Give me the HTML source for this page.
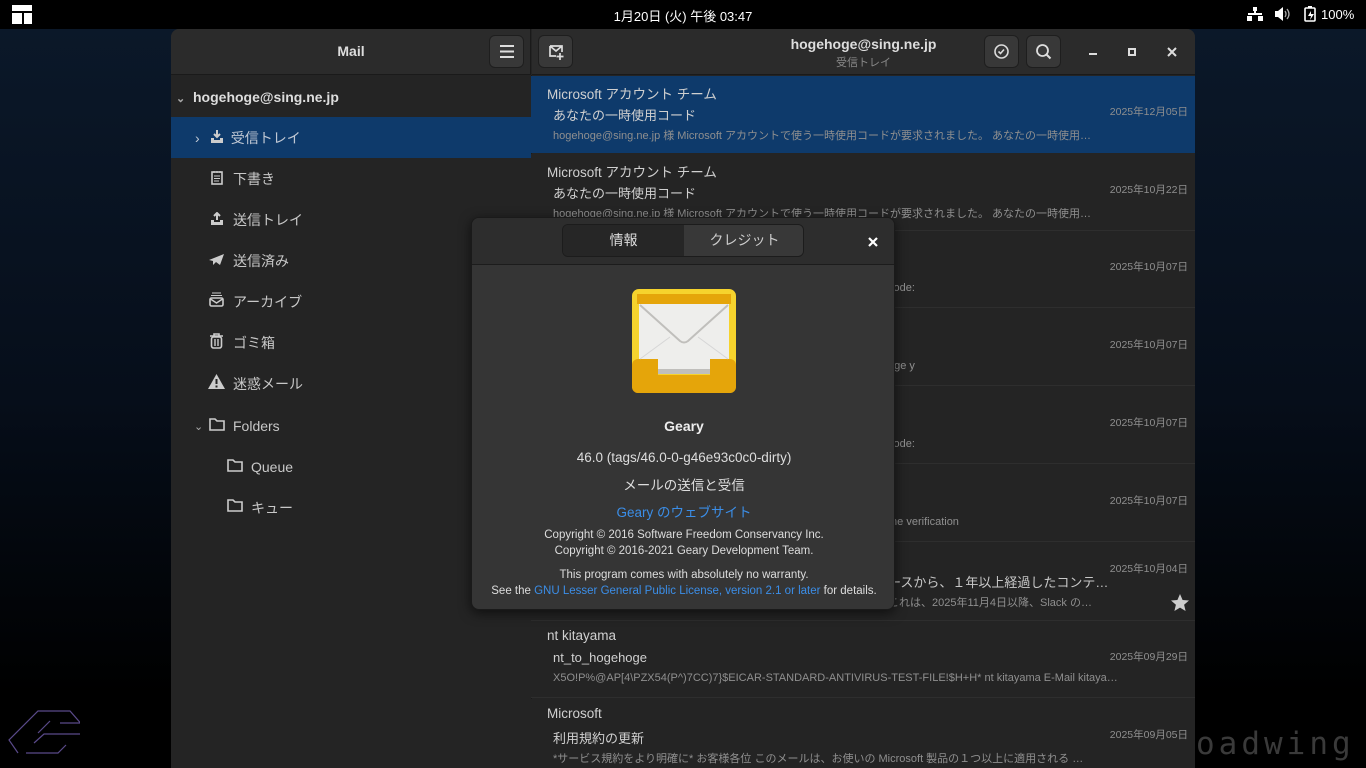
<!DOCTYPE html>
<html><head><meta charset="utf-8"><style>
*{margin:0;padding:0;box-sizing:border-box}
body{width:1366px;height:768px;overflow:hidden;background:#000;font-family:"Liberation Sans","Noto Sans CJK JP",sans-serif;position:relative;color:#ddd}
.abs{position:absolute}
#bg{left:0;top:29px;width:1366px;height:739px;background:linear-gradient(180deg,#0b1829 0%,#060e1a 50%,#000 90%)}
#top{left:0;top:0;width:1366px;height:29px;background:#000;color:#fff;font-size:13px}
#win{left:171px;top:29px;width:1024px;height:739px;background:#242424;border-radius:8px 8px 0 0;overflow:hidden}
.hb{top:0;height:46px;background:#2b2b2b;border-bottom:1px solid #1a1a1a}
.btn{width:35px;height:33px;background:#383838;border-radius:6px;border:1px solid #1e1e1e}
.side{font-size:14px;color:#c8c8c8}
.row{left:360px;width:664px;height:77px;border-bottom:1px solid #2e2e2e;background:#242424}
.row .s{position:absolute;left:16px;top:7px;font-size:13.5px;color:#d0d0d0}
.row .j{position:absolute;left:22px;top:29px;font-size:13px;color:#d0d0d0}
.row .p{position:absolute;left:22px;top:51px;font-size:11px;color:#8f8f8f;white-space:nowrap}
.row .d{position:absolute;right:7px;top:28px;font-size:10.5px;color:#8f8f8f}
#dlg{left:471px;top:217px;width:424px;height:393px;background:#353535;border:1px solid #1a1a1a;border-radius:8px;box-shadow:0 3px 12px rgba(0,0,0,.6);overflow:hidden;text-align:center}
a{color:#3b8ee8}
</style></head><body>
<div id="bg" class="abs"></div>
<div id="top" class="abs">
 <svg class="abs" style="left:12px;top:5px" width="20" height="19"><rect x="0" y="0" width="20" height="6" fill="#fff"/><rect x="0" y="8" width="10" height="11" fill="#fff"/><rect x="12" y="8" width="8" height="11" fill="#fff"/></svg>
 <div class="abs" style="left:0;width:1366px;top:6px;text-align:center">1月20日 (火) 午後 03:47</div>
 <svg class="abs" style="left:1247px;top:7px" width="16" height="14"><rect x="6" y="0" width="4" height="4" fill="#fff"/><rect x="7" y="4" width="2" height="3" fill="#fff"/><rect x="1" y="6" width="14" height="2" fill="#fff"/><rect x="0" y="9" width="5" height="5" fill="#fff"/><rect x="11" y="9" width="5" height="5" fill="#fff"/></svg>
 <svg class="abs" style="left:1275px;top:7px" width="16" height="14"><path d="M0 4h3l5-4v14l-5-4H0z" fill="#fff"/><path d="M10 4q2 3 0 6M12 2q4 5 0 10" stroke="#aaa" fill="none" stroke-width="1.3"/></svg>
 <svg class="abs" style="left:1304px;top:6px" width="13" height="16"><rect x="1" y="2" width="10" height="13" rx="1" fill="none" stroke="#fff" stroke-width="1.6"/><rect x="4" y="0" width="4" height="2" fill="#fff"/><path d="M7 5l-3 5h3l-1 4 4-6H7z" fill="#fff"/></svg>
 <div class="abs" style="left:1321px;top:7px">100%</div>
</div>
<svg class="abs" style="left:8px;top:705px" width="72" height="50"><g fill="none" stroke="#5a4a8a" stroke-width="1.2"><path d="M10 48L1 35 30 6h32l14 16M26 38l10-9h36M18 48h32l8-8M42 16l-12 12M52 18h22"/></g></svg>
<div class="abs" style="left:1196px;top:726px;font-size:31px;color:#3a3a3a;letter-spacing:4px;font-family:'DejaVu Sans Mono',monospace;font-weight:100">oadwing</div>

<div id="win" class="abs">
 <div class="abs hb" style="left:0;width:360px;border-right:1px solid #1a1a1a"></div>
 <div class="abs hb" style="left:361px;width:663px"></div>
 <div class="abs" style="left:0;width:360px;top:14px;text-align:center;font-size:14px;font-weight:bold;color:#ddd">Mail</div>
 <div class="abs btn" style="left:318px;top:6px"><svg width="33" height="31"><path d="M10 10h14M10 15.5h14M10 21h14" stroke="#ddd" stroke-width="2"/></svg></div>
 <div class="abs btn" style="left:367px;top:6px"><svg width="33" height="31"><path d="M11 10h12v6M11 10v10h6M11 10l6 5 6-5M21 17v7M17.5 20.5h7" stroke="#ddd" stroke-width="1.7" fill="none"/></svg></div>
 <div class="abs" style="left:560px;width:265px;top:7px;text-align:center;font-size:14px;font-weight:bold;color:#ddd">hogehoge@sing.ne.jp</div>
 <div class="abs" style="left:560px;width:265px;top:25px;text-align:center;font-size:11px;color:#888">受信トレイ</div>
 <div class="abs btn" style="left:813px;top:6px"><svg width="33" height="31"><circle cx="16.5" cy="15.5" r="6.5" stroke="#ddd" stroke-width="1.6" fill="none"/><path d="M13.5 15.5l2 2 3.5-4" stroke="#ddd" stroke-width="1.6" fill="none"/></svg></div>
 <div class="abs btn" style="left:855px;top:6px"><svg width="33" height="31"><circle cx="15.5" cy="14.5" r="5.5" stroke="#ddd" stroke-width="1.8" fill="none"/><path d="M19.5 18.5l4 4" stroke="#ddd" stroke-width="2"/></svg></div>
 <div class="abs" style="left:918px;top:24px;width:8px;height:2px;background:#ddd"></div>
 <div class="abs" style="left:957px;top:19px;width:8px;height:8px;border:2px solid #ddd"></div>
 <svg class="abs" style="left:996px;top:18px" width="10" height="10"><path d="M1 1l8 8M9 1l-8 8" stroke="#ddd" stroke-width="2"/></svg>

 <div class="abs side" style="left:5px;top:60px;font-weight:bold;color:#ddd"><span style="font-size:11px;color:#aaa">&#8964;</span>&nbsp; hogehoge@sing.ne.jp</div>
 <div class="abs" style="left:0;top:88px;width:360px;height:41px;background:#0e3a6b"></div>
 <div class="abs side" style="left:24px;top:99px;color:#c0c8d4">›&nbsp;&nbsp;&nbsp;&nbsp;&nbsp;&nbsp;&nbsp; 受信トレイ</div>
 <svg class="abs" style="left:40px;top:101px" width="12" height="13"><path d="M6 0v7M3 4l3 3 3-3" stroke="#ccc" stroke-width="2" fill="none"/><path d="M0 8h3v2h6V8h3v5H0z" fill="#ccc"/></svg>
 <div class="abs side" style="left:62px;top:140px">下書き</div>
 <svg class="abs" style="left:40px;top:141px" width="12" height="15"><rect x="1" y="2" width="10" height="12" fill="none" stroke="#ccc" stroke-width="1.6"/><path d="M3 6h6M3 8.5h6M3 11h5M3 1v2M6 1v2M9 1v2" stroke="#ccc"/></svg>
 <div class="abs side" style="left:62px;top:181px">送信トレイ</div>
 <svg class="abs" style="left:40px;top:183px" width="12" height="13"><path d="M6 8V1M3 4l3-3 3 3" stroke="#ccc" stroke-width="2" fill="none"/><path d="M0 8h3v2h6V8h3v5H0z" fill="#ccc"/></svg>
 <div class="abs side" style="left:62px;top:222px">送信済み</div>
 <svg class="abs" style="left:38px;top:225px" width="15" height="12"><path d="M0 6L15 0 11 11 7 8 4 11V7z" fill="#ccc"/></svg>
 <div class="abs side" style="left:62px;top:263px">アーカイブ</div>
 <svg class="abs" style="left:38px;top:263px" width="15" height="15"><path d="M3 1h9M2 3.5h11" stroke="#ccc"/><rect x="1" y="6" width="13" height="8" rx="1.5" fill="none" stroke="#ccc" stroke-width="1.6"/><path d="M1.5 7l6 4 6-4" stroke="#ccc" fill="none" stroke-width="1.4"/></svg>
 <div class="abs side" style="left:62px;top:304px">ゴミ箱</div>
 <svg class="abs" style="left:38px;top:304px" width="15" height="16"><path d="M1 3h13M5 3V1h5v2" stroke="#ccc" stroke-width="1.6" fill="none"/><rect x="2.5" y="4" width="10" height="11" rx="2" fill="none" stroke="#ccc" stroke-width="1.6"/><path d="M6 6v7M9 6v7" stroke="#ccc" stroke-width="1.4"/></svg>
 <div class="abs side" style="left:62px;top:345px">迷惑メール</div>
 <svg class="abs" style="left:37px;top:345px" width="17" height="15"><path d="M8.5 0L17 15H0z" fill="#ccc"/><path d="M8.5 5v5M8.5 11.5v2" stroke="#242424" stroke-width="2"/></svg>
 <div class="abs side" style="left:23px;top:388px"><span style="font-size:11px;color:#aaa">&#8964;</span></div>
 <div class="abs side" style="left:62px;top:389px">Folders</div>
 <svg class="abs" style="left:38px;top:389px" width="16" height="13"><path d="M1 1h5l2 2h7v9H1z" fill="none" stroke="#ccc" stroke-width="1.6"/></svg>
 <div class="abs side" style="left:80px;top:430px">Queue</div>
 <svg class="abs" style="left:56px;top:430px" width="16" height="13"><path d="M1 1h5l2 2h7v9H1z" fill="none" stroke="#ccc" stroke-width="1.6"/></svg>
 <div class="abs side" style="left:80px;top:469px">キュー</div>
 <svg class="abs" style="left:56px;top:470px" width="16" height="13"><path d="M1 1h5l2 2h7v9H1z" fill="none" stroke="#ccc" stroke-width="1.6"/></svg>

 <div class="abs" style="left:360px;top:46px;width:1px;height:700px;background:#1a1a1a"></div>
 <div class="abs row" style="top:47px;background:#0e3a6b;border-color:#0e3a6b"><div class="s">Microsoft アカウント チーム</div><div class="j">あなたの一時使用コード</div><div class="p">hogehoge@sing.ne.jp 様 Microsoft アカウントで使う一時使用コードが要求されました。 あなたの一時使用…</div><div class="d">2025年12月05日</div></div>
 <div class="abs row" style="top:125px"><div class="s">Microsoft アカウント チーム</div><div class="j">あなたの一時使用コード</div><div class="p">hogehoge@sing.ne.jp 様 Microsoft アカウントで使う一時使用コードが要求されました。 あなたの一時使用…</div><div class="d">2025年10月22日</div></div>
 <div class="abs row" style="top:202px"><div class="p" style="left:357px">code:</div><div class="d">2025年10月07日</div></div>
 <div class="abs row" style="top:280px"><div class="p" style="left:357px">nge y</div><div class="d">2025年10月07日</div></div>
 <div class="abs row" style="top:358px"><div class="p" style="left:357px">code:</div><div class="d">2025年10月07日</div></div>
 <div class="abs row" style="top:436px"><div class="p" style="left:357px">the verification</div><div class="d">2025年10月07日</div></div>
 <div class="abs row" style="top:514px;height:78px"><div class="j" style="left:357px;top:29px;color:#c8c8c8">ースから、１年以上経過したコンテ…</div><div class="p" style="left:357px;top:51px">これは、2025年11月4日以降、Slack の…</div><div class="d" style="top:18px">2025年10月04日</div><svg class="abs" style="right:6px;top:51px" width="18" height="17"><path d="M9 0l2.6 6 6.4.5-4.9 4.2 1.5 6.3L9 13.6 3.4 17l1.5-6.3L0 6.5 6.4 6z" fill="#ccc"/></svg></div>
 <div class="abs row" style="top:592px"><div class="s">nt kitayama</div><div class="j">nt_to_hogehoge</div><div class="p">X5O!P%@AP[4\PZX54(P^)7CC)7}$EICAR-STANDARD-ANTIVIRUS-TEST-FILE!$H+H* nt kitayama E-Mail kitaya…</div><div class="d">2025年09月29日</div></div>
 <div class="abs row" style="top:670px"><div class="s">Microsoft</div><div class="j">利用規約の更新</div><div class="p">*サービス規約をより明確に* お客様各位 このメールは、お使いの Microsoft 製品の１つ以上に適用される …</div><div class="d">2025年09月05日</div></div>
</div>

<div id="dlg" class="abs">
 <div class="abs" style="left:0;top:0;width:424px;height:47px;background:#2d2d2d;border-bottom:1px solid #1c1c1c"></div>
 <div class="abs" style="left:90px;top:6px;width:242px;height:33px;border:1px solid #1c1c1c;border-radius:6px;overflow:hidden;font-size:14px">
  <div class="abs" style="left:0;top:0;width:121px;height:33px;background:#262626;color:#ddd;line-height:31px">情報</div>
  <div class="abs" style="left:121px;top:0;width:121px;height:33px;background:#383838;color:#ccc;line-height:31px">クレジット</div>
 </div>
 <svg class="abs" style="left:396px;top:19px" width="10" height="10"><path d="M1 1l8 8M9 1l-8 8" stroke="#fff" stroke-width="2.2"/></svg>
 <svg class="abs" style="left:160px;top:71px" width="104" height="104">
  <rect x="0" y="0" width="104" height="104" rx="7" fill="#f6d32d"/>
  <rect x="5" y="5" width="94" height="10" fill="#e5a50a"/>
  <rect x="0" y="70" width="104" height="34" rx="6" fill="#e5a50a"/>
  <rect x="7" y="15" width="90" height="55" fill="#eeeeec"/>
  <path d="M8 16l40 36q4 3 8 0l40-36" fill="none" stroke="#c0bfbc" stroke-width="2"/>
  <path d="M8 70l30-22M96 70L66 48" stroke="#d6d6d6"/>
  <rect x="26" y="70" width="52" height="16" fill="#f6d32d"/>
  <rect x="26" y="70" width="52" height="10" fill="#eeeeec"/>
  <rect x="26" y="80" width="52" height="5" fill="#c0bfbc"/>
 </svg>
 <div class="abs" style="left:0;width:424px;top:200px;font-size:14px;font-weight:bold;color:#eee">Geary</div>
 <div class="abs" style="left:0;width:424px;top:232px;font-size:13.5px;color:#ddd">46.0 (tags/46.0-0-g46e93c0c0-dirty)</div>
 <div class="abs" style="left:0;width:424px;top:256px;font-size:13.5px;color:#ddd">メールの送信と受信</div>
 <div class="abs" style="left:0;width:424px;top:283px;font-size:13.5px"><a>Geary のウェブサイト</a></div>
 <div class="abs" style="left:0;width:424px;top:309px;font-size:11.5px;color:#ddd;line-height:16px">Copyright © 2016 Software Freedom Conservancy Inc.<br>Copyright © 2016-2021 Geary Development Team.</div>
 <div class="abs" style="left:0;width:424px;top:349px;font-size:11.5px;color:#ddd;line-height:16px">This program comes with absolutely no warranty.<br>See the <a>GNU Lesser General Public License, version 2.1 or later</a> for details.</div>
</div>
</body></html>
